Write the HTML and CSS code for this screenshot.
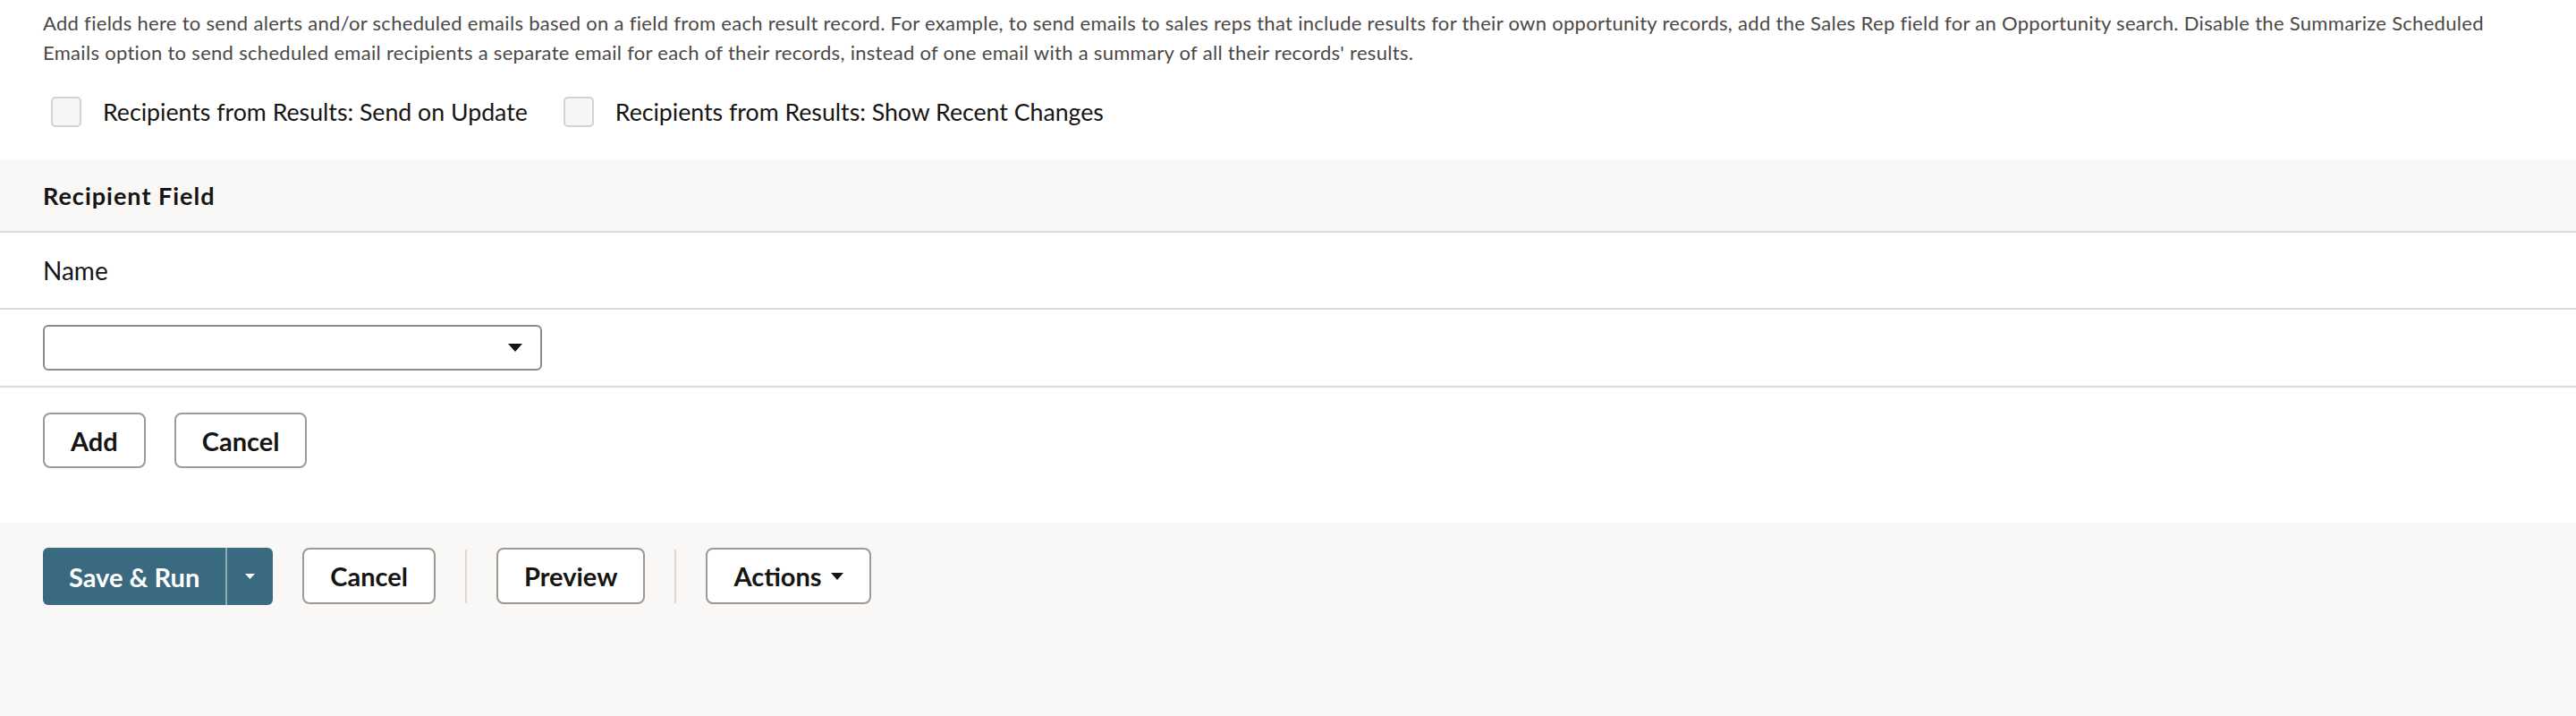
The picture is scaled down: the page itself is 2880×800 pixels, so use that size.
FILE: index.html
```html
<!DOCTYPE html>
<html lang="en">
<head>
  <meta charset="UTF-8" />
  <title>Recipients from Results</title>
  <link rel="stylesheet" href="styles.css">
</head>
<body>
  <div class="page">
    <p class="intro">Add fields here to send alerts and/or scheduled emails based on a field from each result record. For example, to send emails to sales reps that include results for their own opportunity records, add the Sales Rep field for an Opportunity search. Disable the Summarize Scheduled Emails option to send scheduled email recipients a separate email for each of their records, instead of one email with a summary of all their records' results.</p>

    <div class="options">
      <label class="check"><input type="checkbox" /> <span>Recipients from Results: Send on Update</span></label>
      <label class="check"><input type="checkbox" /> <span>Recipients from Results: Show Recent Changes</span></label>
    </div>

    <div class="grid">
      <div class="grid-head">Recipient Field</div>
      <div class="grid-row">Name</div>
      <div class="grid-row select-row">
        <div class="select">
          <span class="select-value"></span>
          <svg class="caret" width="16" height="9" viewBox="0 0 16 9"><path d="M0 0h16L8 9z" fill="#161513"/></svg>
        </div>
      </div>
    </div>

    <div class="row-actions">
      <button class="btn">Add</button>
      <button class="btn">Cancel</button>
    </div>

    <div class="footer">
      <div class="split">
        <button class="btn primary">Save &amp; Run</button>
        <button class="btn primary more"><svg width="11" height="6" viewBox="0 0 11 6"><path d="M0 0h11L5.5 6z" fill="#fff"/></svg></button>
      </div>
      <button class="btn">Cancel</button>
      <span class="sep"></span>
      <button class="btn">Preview</button>
      <span class="sep"></span>
      <button class="btn">Actions <svg width="14" height="8" viewBox="0 0 14 8"><path d="M0 0h14L7 8z" fill="#161513"/></svg></button>
    </div>
  </div>
</body>
</html>
```

FILE: styles.css
```css
body {
  margin: 0;
  font-family: Lato, 'Noto Sans', sans-serif;
  color: #161513;
  background: #fff;
}

.page {
  min-height: 800px;
  display: flex;
  flex-direction: column;
}

.intro {
  margin: 0;
  padding: 9px 48px 0;
  font-size: 22px;
  line-height: 33px;
  letter-spacing: 0.3px;
  color: #4b4845;
}

.options {
  display: flex;
  align-items: center;
  gap: 40px;
  padding: 0 57px;
  height: 34px;
  margin: 33px 0 36px;
}

.check {
  display: flex;
  align-items: center;
  gap: 24px;
  font-size: 26.7px;
}

.check input {
  appearance: none;
  box-sizing: border-box;
  margin: 0;
  width: 34px;
  height: 34px;
  background: #f6f6f5;
  border: 2px solid #d4d2cf;
  border-radius: 5px;
}

.grid-head {
  background: #f9f8f6;
  height: 80px;
  display: flex;
  align-items: center;
  padding: 0 48px;
  font-size: 27px;
  font-weight: bold;
  letter-spacing: 1px;
  border-bottom: 2px solid #dcd8d3;
}

.grid-row {
  height: 84px;
  display: flex;
  align-items: center;
  padding: 0 48px;
  font-size: 28px;
  border-bottom: 2px solid #dcd8d3;
}

.select-row {
  height: 85px;
}

.select {
  width: 558px;
  height: 51px;
  box-sizing: border-box;
  border: 2px solid #8c8b89;
  border-radius: 6px;
  display: flex;
  align-items: center;
  justify-content: flex-end;
  padding: 0 20px;
}

.row-actions {
  display: flex;
  gap: 32px;
  padding: 28px 48px 61px;
}

.btn {
  font-family: inherit;
  font-size: 29px;
  font-weight: bold;
  color: #161513;
  background: #fff;
  border: 2px solid #9e9995;
  border-radius: 8px;
  height: 62px;
  padding: 0 29px;
  display: inline-flex;
  align-items: center;
  gap: 10px;
  cursor: pointer;
}

.footer {
  flex: 1;
  background: #f9f8f6;
  display: flex;
  align-items: flex-start;
  gap: 33px;
  padding: 28px 48px;
}

.footer .btn {
  height: 63px;
}

.split {
  display: flex;
}

.btn.primary {
  background: #3a6a80;
  color: #fff;
  border: none;
  height: 64px;
  border-radius: 6px 0 0 6px;
}

.btn.primary.more {
  border-left: 2px solid #8eaab7;
  border-radius: 0 6px 6px 0;
  padding: 0 20px;
}

.sep {
  width: 2px;
  height: 60px;
  margin-top: 2px;
  background: #dddad6;
}
```
